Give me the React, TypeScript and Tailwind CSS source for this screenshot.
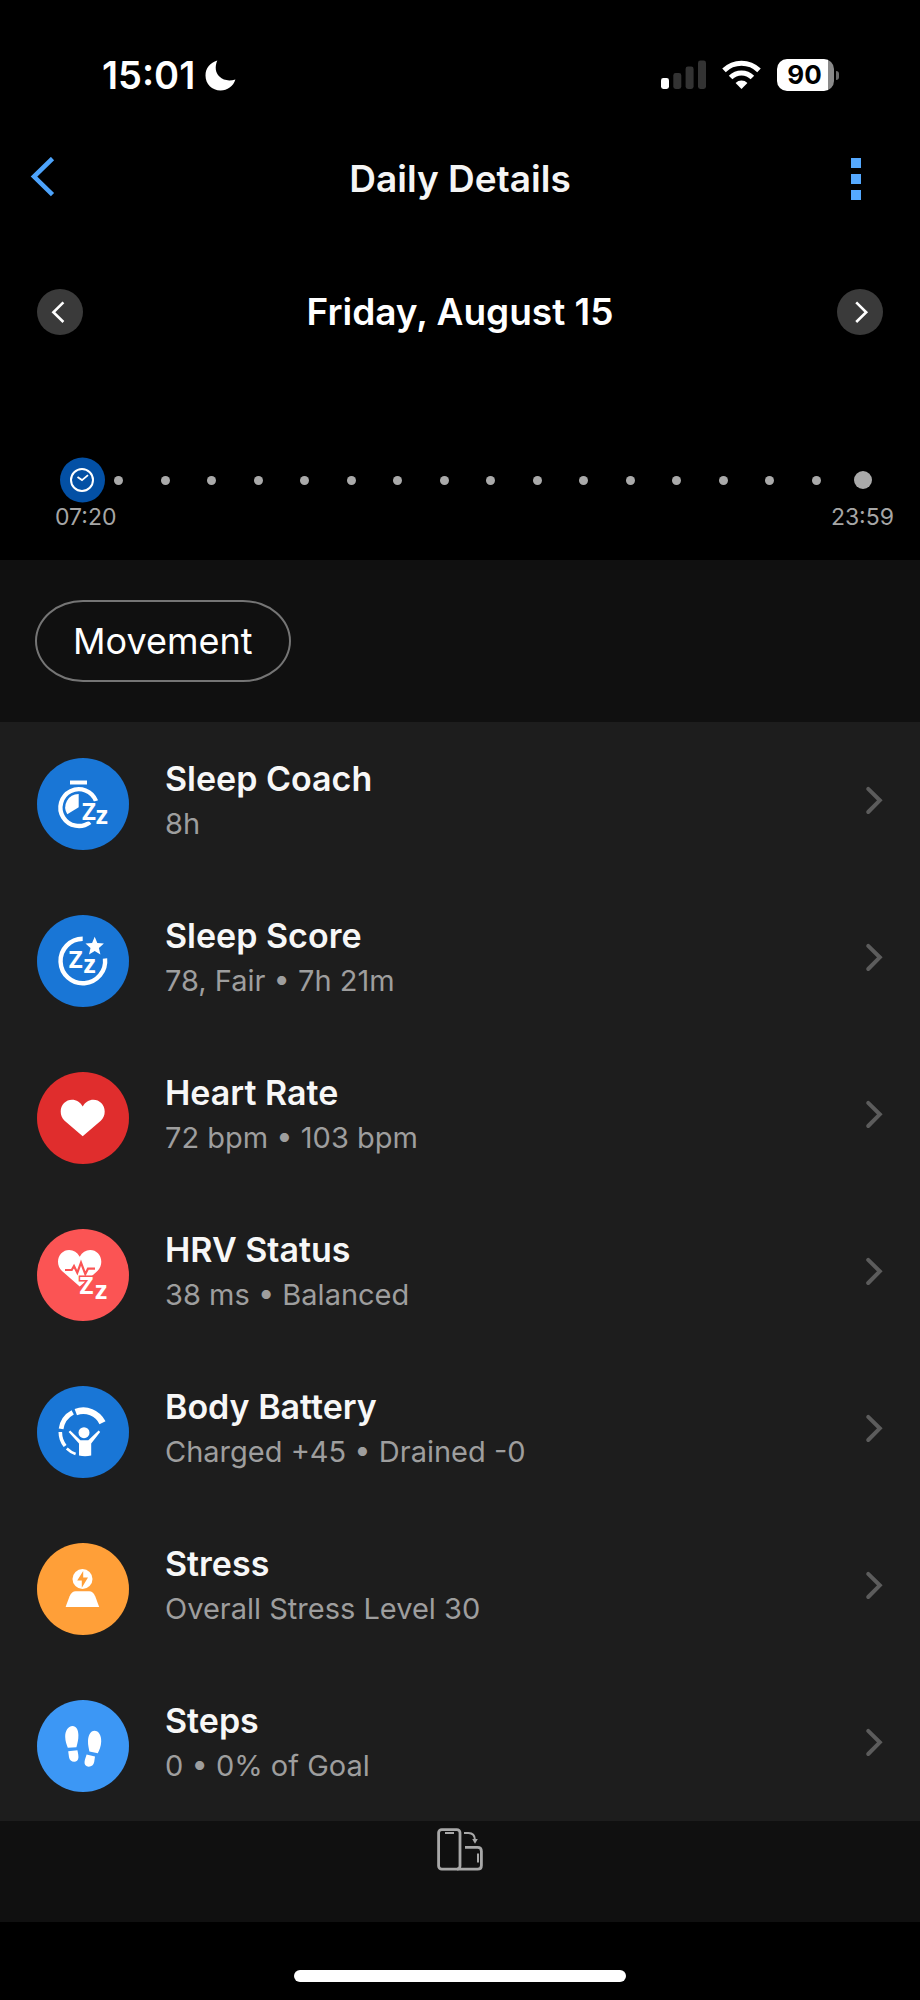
import type { ReactNode } from "react";

type Metric = {
  title: string;
  detail: string;
  color: string;
  icon: ReactNode;
};

type ZzProps = {
  big: [number, number];
  small: [number, number];
  outline?: string;
};

function Zz({ big, small, outline = "none" }: ZzProps) {
  return (
    <g
      fontFamily="Open Sans, sans-serif"
      fontWeight="700"
      stroke={outline}
      strokeWidth="3"
      paintOrder="stroke"
    >
      <text x={big[0]} y={big[1]} fontSize="24">
        Z
      </text>
      <text x={small[0]} y={small[1]} fontSize="25">
        z
      </text>
    </g>
  );
}

const METRICS: Metric[] = [
  {
    title: "Sleep Coach",
    detail: "8h",
    color: "bg-[#1976d6]",
    icon: (
      <>
        <path d="M33 22.5h17v4h-17z" />
        <path
          d="M59 43A18.4 18.4 0 1 0 53 64.2"
          fill="none"
          stroke="white"
          strokeWidth="4.4"
        />
        <path d="M41.7 49.3V36A13.3 13.3 0 0 0 30.3 56.3Z" />
        <Zz big={[44.9, 61.8]} small={[58.7, 65.6]} outline="#1976d6" />
      </>
    ),
  },
  {
    title: "Sleep Score",
    detail: "78, Fair • 7h 21m",
    color: "bg-[#1976d6]",
    icon: (
      <>
        <path
          d="M45.7 23.7A22.3 22.3 0 1 0 68 43.5"
          fill="none"
          stroke="white"
          strokeWidth="4.4"
        />
        <path d="M57.7 21.8l2.6 6.3 6.6.5-5 4.4 1.5 6.6-5.7-3.5-5.7 3.5 1.5-6.6-5-4.4 6.6-.5z" />
        <Zz big={[31.8, 53.2]} small={[46.6, 58]} />
      </>
    ),
  },
  {
    title: "Heart Rate",
    detail: "72 bpm • 103 bpm",
    color: "bg-[#e02d2d]",
    icon: (
      <path d="M45.7 64.3L27.6 48.8C25 46.3 23.7 43.2 23.7 39.5C23.7 32.5 29 27.7 35 27.7C39.5 27.7 43.2 30 45.7 34.5C48.2 30 52 27.7 56.4 27.7C62.4 27.7 67.7 32.5 67.7 39.5C67.7 43.2 66.4 46.3 63.8 48.8Z" />
    ),
  },
  {
    title: "HRV Status",
    detail: "38 ms • Balanced",
    color: "bg-[#fb5454]",
    icon: (
      <>
        <path d="M42.7 57.6L25 42C22.3 39.5 21 36.4 21 32.8C21 25.8 26.2 21 32.2 21C36.7 21 40.2 23.3 42.7 27.7C45.2 23.3 48.8 21 53.2 21C59.2 21 64.3 25.8 64.3 32.8C64.3 36.4 63 39.5 60.4 42L56 46Z" />
        <path
          d="M28 41h6.7l2.3-4 3.3 6.7 3.7-10 4.3 11.3 2.7-5.3h7"
          fill="none"
          stroke="#fb5454"
          strokeWidth="2.2"
        />
        <Zz big={[42.6, 65.4]} small={[57.9, 69.8]} outline="#fb5454" />
      </>
    ),
  },
  {
    title: "Body Battery",
    detail: "Charged +45 • Drained -0",
    color: "bg-[#1976d6]",
    icon: (
      <>
        <g fill="none" stroke="white">
          <path d="M38.8 26.1A21.3 21.3 0 0 1 65.5 36.8" strokeWidth="6.7" />
          <path d="M24.1 42.9A22.4 22.4 0 0 1 35.7 26.3" strokeWidth="4.8" />
          <path d="M23.3 46A23 23 0 0 0 28.1 60" strokeWidth="3.6" />
          <path d="M29.8 62.5A23.3 23.3 0 0 0 38.6 68" strokeWidth="2.6" />
        </g>
        <circle cx="47" cy="46.7" r="5.5" />
        <path d="M31.6 45.9L33.2 44.4L43.4 54.2H51.3L61.6 44.4L63.2 46L54.2 57.6V69.6Q48 71 42 69.6V57.6Z" />
      </>
    ),
  },
  {
    title: "Stress",
    detail: "Overall Stress Level 30",
    color: "bg-[#ff9f38]",
    icon: (
      <>
        <circle cx="45.5" cy="36" r="10" />
        <path
          d="M46.2 28L40.2 37.4H44.8V44.8L51 34.4H46.2Z"
          fill="#ff9f38"
        />
        <path d="M28.6 64L32.6 53.2Q34.8 48.3 38.6 48.3H52.2Q56 48.3 58.2 53.2L62.2 64Z" />
      </>
    ),
  },
  {
    title: "Steps",
    detail: "0 • 0% of Goal",
    color: "bg-[#3c97f5]",
    icon: (
      <>
        <path d="M35.6 26C31 26 28 31 28.2 37C28.3 41.5 29.6 44.5 30.8 47.7L39.4 47.3C40.4 43.5 41.5 40 41.4 35C41.3 29.6 39.2 26 35.6 26Z" />
        <path d="M31.2 51.2L40.4 50.2C41 53 41.6 55.6 41.4 57.8C41.1 60.3 39.6 61.7 37.2 61.7C34.4 61.7 32.6 60 32 57.2Z" />
        <path d="M57.4 30.7C53.6 30.7 51.2 35 51 41C50.9 45 51.8 48.5 52.4 51.4L60.8 53.2C62.4 50 64 46.5 64.2 41.5C64.4 35.5 61.8 30.7 57.4 30.7Z" />
        <path d="M49.6 54.4L58 56.4L57.2 62C56.6 64.9 54.6 66.7 51.8 66.7C49 66.7 47.2 64.8 47.6 61.6C47.8 59.3 48.8 57 49.6 54.4Z" />
      </>
    ),
  },
];

const TIMELINE_DOTS = Array.from({ length: 16 }, (_, i) => i);

function StatusBar() {
  return (
    <div className="flex h-[150px] items-center justify-between pr-[81px] pl-[102px]">
      <div className="flex items-center gap-2.5">
        <span className="text-[38px] leading-12 font-semibold">15:01</span>
        <svg width="31" height="31" viewBox="0 0 31 31" fill="white">
          <path d="M12.3 0.6C9.6 7 10.4 12.8 14.4 16.6C18.5 20.5 24.2 21.4 30.4 19.4C28.2 26.3 22.3 30.4 15.6 30.4C7 30.4 0.5 23.8 0.5 15.4C0.5 8.4 5.2 2.6 12.3 0.6Z" />
        </svg>
      </div>
      <div className="flex items-center gap-4">
        <svg width="45" height="30" viewBox="0 0 45 30" fill="#333">
          <rect x="0" y="18" width="8" height="11" rx="2.4" fill="white" />
          <rect x="12.3" y="13" width="8" height="16" rx="2.4" />
          <rect x="24.6" y="6.5" width="8" height="22.5" rx="2.4" />
          <rect x="37" y="0.5" width="8" height="28.5" rx="2.4" />
        </svg>
        <svg width="39" height="30" viewBox="0 0 39 30" fill="none">
          <g stroke="white" strokeWidth="5">
            <path d="M2 10.4A25 25 0 0 1 37 10.4" />
            <path d="M8.6 17.4A15.4 15.4 0 0 1 30.4 17.4" />
          </g>
          <path
            d="M19.5 29L13.6 23A8.5 8.5 0 0 1 25.4 23Z"
            fill="white"
          />
        </svg>
        <div className="flex items-center gap-0.5">
          <div className="flex h-8 w-[57px] items-center justify-center rounded-[10px] bg-linear-to-r from-white from-90% to-[#8a8a8a] to-90% pr-0.5">
            <span className="text-[26px] leading-8 font-bold text-black">
              90
            </span>
          </div>
          <div className="h-[9px] w-[3px] rounded-r-full bg-[#6b6b6b]" />
        </div>
      </div>
    </div>
  );
}

function Header() {
  return (
    <header className="flex h-[58px] items-center justify-between px-7">
      <button type="button" aria-label="Back" className="w-18">
        <svg width="30" height="44" viewBox="0 0 30 44" fill="none">
          <path d="M24.5 1.5L6 19.6L24.5 37.7" stroke="#4da3fb" strokeWidth="4.6" />
        </svg>
      </button>
      <h1 className="text-[37px] leading-12 font-semibold text-[#f5f5f5]">
        Daily Details
      </h1>
      <button
        type="button"
        aria-label="More options"
        className="flex w-18 flex-col items-center gap-1.5"
      >
        <span className="size-2.5 bg-[#55a9ff]" />
        <span className="size-2.5 bg-[#55a9ff]" />
        <span className="size-2.5 bg-[#55a9ff]" />
      </button>
    </header>
  );
}

function DateNav() {
  return (
    <div className="flex h-[208px] items-center justify-between px-[37px]">
      <button
        type="button"
        aria-label="Previous day"
        className="size-[46px] rounded-full bg-[#3a3a3a]"
      >
        <svg width="46" height="46" viewBox="0 0 46 46" fill="none">
          <path d="M26.4 13.4L16.4 23.2L26.4 33" stroke="white" strokeWidth="2.6" />
        </svg>
      </button>
      <h2 className="text-[37px] leading-12 font-semibold">
        Friday, August 15
      </h2>
      <button
        type="button"
        aria-label="Next day"
        className="size-[46px] rounded-full bg-[#3a3a3a]"
      >
        <svg width="46" height="46" viewBox="0 0 46 46" fill="none">
          <path d="M19.2 13.4L29.2 23.2L19.2 33" stroke="white" strokeWidth="2.6" />
        </svg>
      </button>
    </div>
  );
}

function Timeline() {
  return (
    <div className="pt-[41px] pb-[29px]">
      <div className="flex items-center gap-2 pr-[53px] pl-[60px]">
        <svg width="46" height="46" viewBox="0 0 46 46" fill="none">
          <circle cx="22.5" cy="23" r="22.5" fill="#0350a5" />
          <circle cx="22" cy="23" r="11" stroke="white" strokeWidth="2" />
          <path d="M17.5 19.9L22 23.1L28 18.1" stroke="white" strokeWidth="1.8" />
        </svg>
        <div className="flex grow items-center justify-between">
          {TIMELINE_DOTS.map((dot) => (
            <span key={dot} className="size-[9px] rounded-full bg-[#aaa]" />
          ))}
          <span className="flex w-[9px] justify-center">
            <span className="size-[18px] shrink-0 rounded-full bg-[#aaa]" />
          </span>
        </div>
      </div>
      <div className="flex justify-between pr-[26px] pl-[55px] text-[23px] leading-7 text-[#a6a6a6]">
        <span>07:20</span>
        <span>23:59</span>
      </div>
    </div>
  );
}

function MetricRow({ title, detail, color, icon }: Metric) {
  return (
    <li>
      <a href="#" className="flex px-[37px] pt-9 pb-[29px]">
        <span className={`size-[92px] shrink-0 rounded-full ${color}`}>
          <svg width="92" height="92" viewBox="0 0 92 92" fill="white">
            {icon}
          </svg>
        </span>
        <span className="flex grow flex-col pl-9">
          <span className="text-[34px] leading-[42px] font-semibold text-[#f7f7f7]">
            {title}
          </span>
          <span className="text-[29px] leading-12 text-[#9e9e9e]">
            {detail}
          </span>
        </span>
        <svg width="18" height="84" viewBox="0 0 18 84" fill="none">
          <path
            d="M3.2 30.8L14.8 42.3L3.2 54"
            stroke="#5c5c5c"
            strokeWidth="4"
            strokeLinecap="round"
          />
        </svg>
      </a>
    </li>
  );
}

function RotateIcon() {
  return (
    <svg width="46" height="44" viewBox="0 0 46 44" fill="none">
      <g stroke="#a8a8a8" strokeWidth="2.8">
        <rect x="1.6" y="1.6" width="21.4" height="39.6" rx="3.2" />
        <path d="M28 19.4H40.6Q44.4 19.4 44.4 23.2V37.4Q44.4 41.2 40.6 41.2H20" />
        <path d="M8 5H17M41 25.4V34.6" strokeWidth="2" />
        <path d="M27 5H31.4Q37.8 5 38 12" strokeWidth="2" />
      </g>
      <path d="M35.2 11H40.8L38 15.8Z" fill="#a8a8a8" />
    </svg>
  );
}

function App() {
  return (
    <div className="min-h-screen bg-black font-['Inter',sans-serif] text-white">
      <StatusBar />
      <Header />
      <DateNav />
      <Timeline />
      <main className="bg-[#101010]">
        <div className="px-[35px] py-10">
          <button
            type="button"
            className="h-[82px] rounded-[48px/41px] border-2 border-[#757575] px-9 text-[36px] leading-12"
          >
            Movement
          </button>
        </div>
        <ul className="bg-[#1d1d1d]">
          {METRICS.map((metric) => (
            <MetricRow key={metric.title} {...metric} />
          ))}
        </ul>
        <div className="flex justify-center pt-[7px] pb-[50px]">
          <RotateIcon />
        </div>
      </main>
      <div className="flex justify-center pt-12 pb-[18px]">
        <div className="h-3 w-[36%] rounded-full bg-white" />
      </div>
    </div>
  );
}

export default App;
